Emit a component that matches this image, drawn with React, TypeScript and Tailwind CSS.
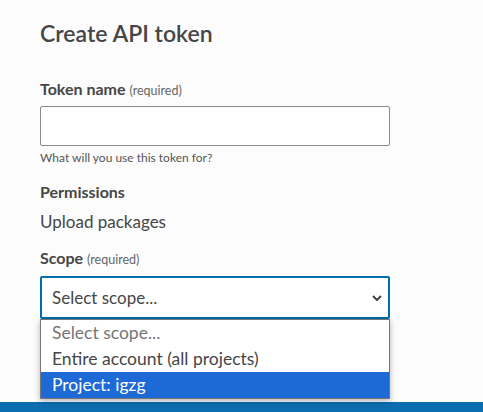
import React from "react";

const font = { fontFamily: "Lato, 'Noto Sans', sans-serif" };

export default function App() {
  return (
    <div style={font} className="relative flex h-[412px] flex-col bg-[#fcfcfc] text-[#464646]">
      <main className="flex-1 pl-10 pt-[18px]">
        <h1 className="text-[23px] leading-[30px] font-semibold text-[#464646]">Create API token</h1>

        <div className="mt-[31px] w-[350px]">
          <label className="block text-[16px] leading-[20px] font-bold">
            Token name <span className="text-[12.5px] font-normal text-[#666]">(required)</span>
          </label>
          <div className="mt-[5px] h-[40px] rounded-[2px] border border-[#8a8a8a] bg-white" />
          <p className="mt-[4px] text-[12px] leading-[16px] text-[#555]">What will you use this token for?</p>
        </div>

        <div className="mt-[16px]">
          <p className="text-[16px] leading-[20px] font-bold">Permissions</p>
          <p className="mt-[8px] text-[17px] leading-[24px]">Upload packages</p>
        </div>

        <div className="mt-[14px] w-[350px]">
          <label className="block text-[16px] leading-[20px] font-bold">
            Scope <span className="text-[12.5px] font-normal text-[#666]">(required)</span>
          </label>
          <div className="relative mt-[6px]">
            <div className="flex h-[43px] items-center justify-between rounded-[2px] border-2 border-[#006dad] bg-white pl-[10px] pr-[5px]">
              <span className="text-[17px] text-[#464646]">Select scope...</span>
              <svg width="10" height="6" viewBox="0 0 10 6" className="mr-[1px]">
                <path d="M1 1l4 4 4-4" fill="none" stroke="#444" strokeWidth="2" />
              </svg>
            </div>
            <ul className="absolute left-0 right-0 top-full z-10 border border-[#767676] bg-white text-[17.5px] leading-[26px] shadow-[0_2px_6px_rgba(0,0,0,0.3)]">
              <li className="px-[11px] text-[#757575]">Select scope...</li>
              <li className="px-[11px] text-[#464646]">Entire account (all projects)</li>
              <li className="bg-[#1d6ad6] px-[11px] text-white">Project: igzg</li>
            </ul>
          </div>
        </div>
      </main>
      <div className="h-[10px] bg-[#0a6db0]" />
    </div>
  );
}
